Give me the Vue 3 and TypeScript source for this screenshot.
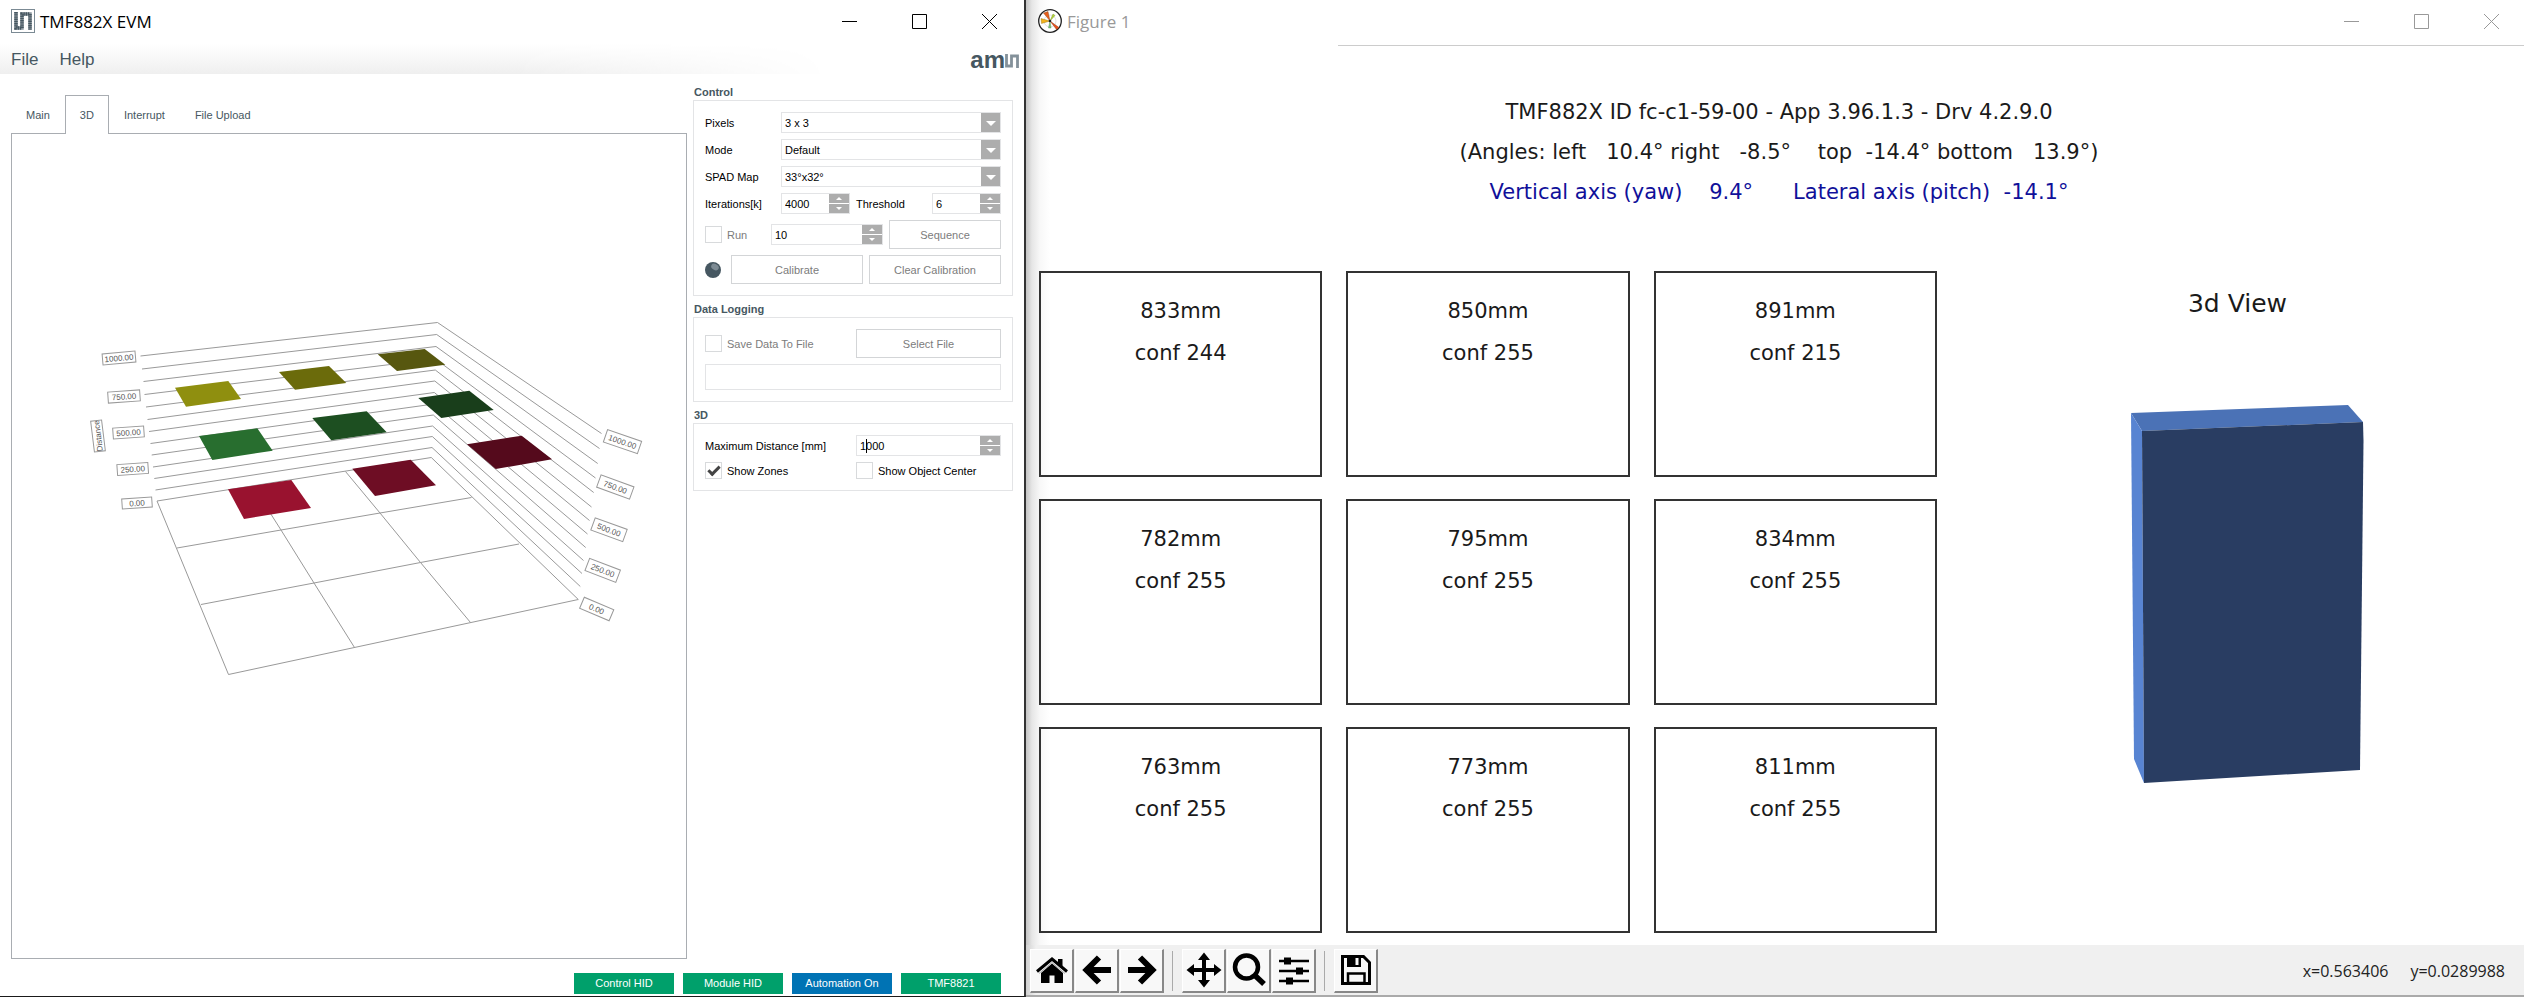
<script setup lang="ts">
import { ref } from 'vue'

type Point = [number, number]

interface Tag {
  text: string
  x: number
  y: number
  w: number
  h: number
  angle: number
}

const tabs = ['Main', '3D', 'Interrupt', 'File Upload']
const activeTab = ref('3D')

const pixels = ref('3 x 3')
const mode = ref('Default')
const spadMap = ref('33°x32°')
const iterations = ref('4000')
const threshold = ref('6')
const runCount = ref('10')
const runEnabled = ref(false)
const saveToFile = ref(false)
const filePath = ref('')
const maxDistance = ref('1000')
const showZones = ref(true)
const showCenter = ref(false)

const statuses = [
  { text: 'Control HID', kind: 'ok' },
  { text: 'Module HID', kind: 'ok' },
  { text: 'Automation On', kind: 'info' },
  { text: 'TMF8821', kind: 'ok' },
]

const levels: [Point, Point, Point][] = [
  [[140.5, 356], [437.5, 322.5], [601.5, 433.5]],
  [[142, 369], [436.7, 334.5], [599.5, 448.5]],
  [[143.5, 381.5], [436, 346.5], [597.7, 463.5]],
  [[144.5, 394.5], [435.5, 359], [595.5, 478]],
  [[146, 407], [435.3, 370], [593.7, 492.5]],
  [[147.5, 419.5], [434.8, 381], [591.5, 507]],
  [[149, 431.5], [434.3, 392.5], [589.5, 520.5]],
  [[150.5, 443.5], [433.8, 404], [587.5, 534]],
  [[151.7, 455], [433.3, 415], [585.7, 547.5]],
  [[153, 467], [432.6, 426], [583.5, 560.5]],
  [[154.3, 478.5], [432.3, 436.5], [582, 573.5]],
  [[155.5, 490], [432, 447.5], [580.3, 586.5]],
  [[157, 501], [431.3, 457.5], [578.3, 599.5]],
]

const floorLines: Point[][] = [
  [[157, 501], [228.5, 674.5], [578.3, 599.5]],
  [[177, 548], [281, 530], [380, 513], [471.5, 497.5]],
  [[201, 604.5], [314, 583], [420.5, 562.5], [519, 544]],
  [[253, 486], [281, 530], [314, 583], [354.5, 647.5]],
  [[345.5, 471.5], [380, 513], [420.5, 562.5], [470.5, 622.5]],
]

const zones: { color: string; pts: Point[] }[] = [
  { color: '#8f8f0f', pts: [[175, 387.7], [228.3, 381], [241, 399], [186, 406.7]] },
  { color: '#6b6b0b', pts: [[279, 372], [329, 366], [346.3, 383], [295, 389.7]] },
  { color: '#57570f', pts: [[377.7, 354.3], [424.7, 349], [445.3, 364.7], [397, 371]] },
  { color: '#286e2f', pts: [[199, 436], [257.3, 428.3], [272.7, 450.7], [212.3, 460]] },
  { color: '#1d4f21', pts: [[312.3, 418], [366.7, 411.3], [386.7, 432.3], [331.3, 440.3]] },
  { color: '#193e1b', pts: [[418.3, 398], [469.3, 390.7], [493.7, 410], [441.3, 418]] },
  { color: '#99122f', pts: [[228, 489.3], [291.3, 480], [311, 508], [244, 519]] },
  { color: '#6e0d24', pts: [[352.3, 468.7], [410.7, 459.7], [436, 485.3], [375, 496]] },
  { color: '#550a1c', pts: [[467, 444.3], [521.7, 435.7], [552, 459.3], [495.7, 469]] },
]

const tags: Tag[] = [
  { text: '1000.00', x: 119, y: 358, w: 33, h: 11, angle: -5 },
  { text: '750.00', x: 124, y: 396.5, w: 32, h: 11, angle: -4 },
  { text: '500.00', x: 128.5, y: 432.5, w: 31, h: 11, angle: -4 },
  { text: '250.00', x: 132.7, y: 469, w: 31, h: 11, angle: -4 },
  { text: '0.00', x: 137, y: 503, w: 30, h: 10, angle: -4 },
  { text: 'Distance', x: 98, y: 436, w: 31, h: 11, angle: -97 },
  { text: '1000.00', x: 622.5, y: 441.7, w: 36, h: 13, angle: 19 },
  { text: '750.00', x: 615.3, y: 487, w: 35, h: 13, angle: 20 },
  { text: '500.00', x: 609, y: 529.7, w: 34, h: 13, angle: 20 },
  { text: '250.00', x: 602.7, y: 570.3, w: 33, h: 13, angle: 21 },
  { text: '0.00', x: 596.7, y: 609, w: 32, h: 12, angle: 23 },
]

const readings = [
  [833, 244], [850, 255], [891, 215],
  [782, 255], [795, 255], [834, 255],
  [763, 255], [773, 255], [811, 255],
]

const anglesLine = '(Angles: left   10.4° right   -8.5°    top  -14.4° bottom   13.9°)'
const axesLine = 'Vertical axis (yaw)    9.4°      Lateral axis (pitch)  -14.1°'

const join = (pts: Point[]): string => pts.map((p) => p.join(',')).join(' ')
</script>

<template>
  <div class="desktop">
    <section class="evm">
      <header class="titlebar">
        <svg class="app-icon" viewBox="0 0 24 24" aria-hidden="true">
          <rect x="0.5" y="0.5" width="23" height="23" fill="#fff" stroke="#7b8a94" />
          <path d="M5 3V19H11V5H19V21" fill="none" stroke="#8c979e" stroke-width="3.500" />
          <path d="M5 3V19H11V5H19V21" fill="none" stroke="#465761" stroke-width="3.500" stroke-dasharray="1.400 .8" />
        </svg>
        <h1>TMF882X EVM</h1>
        <div class="win-buttons">
          <button type="button" aria-label="Minimize"><svg viewBox="0 0 16 16"><path d="M0 7.500H15" /></svg></button>
          <button type="button" aria-label="Maximize"><svg viewBox="0 0 16 16"><path d="M.5 .5H14.500V14.500H.5Z" /></svg></button>
          <button type="button" aria-label="Close"><svg viewBox="0 0 16 16"><path d="M0 0L15 15M15 0L0 15" /></svg></button>
        </div>
      </header>

      <nav class="menubar">
        <button type="button">File</button>
        <button type="button">Help</button>
        <span class="brand">am<svg viewBox="0 0 15 14" aria-hidden="true">
          <path d="M1.500 0V12H6.500V2H12.500V14" fill="none" stroke="#84919a" stroke-width="2.800" />
        </svg></span>
      </nav>

      <div class="evm-body">
        <div class="view">
          <div class="tabs" role="tablist">
            <button
              v-for="tab in tabs"
              :key="tab"
              type="button"
              role="tab"
              :aria-selected="tab === activeTab"
              :class="{ active: tab === activeTab }"
              @click="activeTab = tab"
            >{{ tab }}</button>
          </div>
          <div class="pane">
            <svg viewBox="12 134 674 824" class="plot" role="img" aria-label="Distance per zone">
              <g class="wire">
                <polyline v-for="(level, i) in levels" :key="'l' + i" :points="join(level)" />
                <polyline v-for="(line, i) in floorLines" :key="'f' + i" :points="join(line)" />
              </g>
              <polygon v-for="zone in zones" :key="zone.color" :points="join(zone.pts)" :fill="zone.color" />
              <g
                v-for="(tag, i) in tags"
                :key="'t' + i"
                class="tag"
                :transform="`translate(${tag.x} ${tag.y}) rotate(${tag.angle})`"
              >
                <rect :x="-tag.w / 2" :y="-tag.h / 2" :width="tag.w" :height="tag.h" />
                <text y="3">{{ tag.text }}</text>
              </g>
            </svg>
          </div>
        </div>

        <aside class="settings">
          <h2>Control</h2>
          <div class="group">
            <div class="row">
              <label class="name" for="pixels">Pixels</label>
              <div class="select"><select id="pixels" v-model="pixels"><option>3 x 3</option></select><i></i></div>
            </div>
            <div class="row">
              <label class="name" for="mode">Mode</label>
              <div class="select"><select id="mode" v-model="mode"><option>Default</option></select><i></i></div>
            </div>
            <div class="row">
              <label class="name" for="spad">SPAD Map</label>
              <div class="select"><select id="spad" v-model="spadMap"><option>33°x32°</option></select><i></i></div>
            </div>
            <div class="row">
              <label class="name" for="iter">Iterations[k]</label>
              <div class="spin short">
                <input id="iter" v-model="iterations" type="text" />
                <span><button type="button" aria-label="More"></button><button type="button" aria-label="Less"></button></span>
              </div>
              <label class="name threshold" for="thr">Threshold</label>
              <div class="spin short">
                <input id="thr" v-model="threshold" type="text" />
                <span><button type="button" aria-label="More"></button><button type="button" aria-label="Less"></button></span>
              </div>
            </div>
            <div class="row">
              <label class="check run off"><input v-model="runEnabled" type="checkbox" />Run</label>
              <div class="spin">
                <input v-model="runCount" type="text" aria-label="Run count" />
                <span><button type="button" aria-label="More"></button><button type="button" aria-label="Less"></button></span>
              </div>
              <button type="button" class="push sequence">Sequence</button>
            </div>
            <div class="row">
              <svg class="led" viewBox="0 0 16 16" aria-hidden="true">
                <circle cx="8" cy="8" r="8" fill="#465761" />
                <ellipse cx="10" cy="5" rx="4" ry="3" fill="#7d8b94" transform="rotate(30 10 5)" />
              </svg>
              <button type="button" class="push">Calibrate</button>
              <button type="button" class="push after">Clear Calibration</button>
            </div>
          </div>

          <h2>Data Logging</h2>
          <div class="group">
            <div class="row">
              <label class="check half off"><input v-model="saveToFile" type="checkbox" />Save Data To File</label>
              <button type="button" class="push">Select File</button>
            </div>
            <input v-model="filePath" class="path" type="text" aria-label="Log file" />
          </div>

          <h2>3D</h2>
          <div class="group">
            <div class="row">
              <label class="half" for="dist">Maximum Distance [mm]</label>
              <div class="spin">
                <input id="dist" v-model="maxDistance" type="text" />
                <b class="caret"></b>
                <span><button type="button" aria-label="More"></button><button type="button" aria-label="Less"></button></span>
              </div>
            </div>
            <div class="row">
              <label class="check half"><input v-model="showZones" type="checkbox" />Show Zones</label>
              <label class="check"><input v-model="showCenter" type="checkbox" />Show Object Center</label>
            </div>
          </div>
        </aside>
      </div>

      <footer class="status">
        <span v-for="s in statuses" :key="s.text" :class="s.kind">{{ s.text }}</span>
      </footer>
    </section>

    <section class="figure">
      <header class="titlebar">
        <svg class="app-icon" viewBox="0 0 24 24" aria-hidden="true">
          <circle cx="12" cy="12" r="11.300" fill="#fff" stroke="#222" stroke-width="1.300" />
          <circle cx="12" cy="12" r="6" fill="none" stroke="#ccc" stroke-width=".6" />
          <path d="M12 12L5.500 4L10 2.500Z" fill="#e8601c" stroke="#7a3a10" stroke-width=".4" />
          <path d="M12 12L3 9.500L3.500 14.500Z" fill="#f2b21b" stroke="#8a6a10" stroke-width=".4" />
          <path d="M12 12L15 5L17 6.500Z" fill="#b5d334" stroke="#6a8a20" stroke-width=".4" />
          <path d="M12 12L21 18.500L18.500 20.500Z" fill="#e8501c" stroke="#7a3010" stroke-width=".4" />
          <path d="M12 12L13 19L10.500 19Z" fill="#7cc576" stroke="#4a8a50" stroke-width=".4" />
          <circle cx="12" cy="12" r="1.300" fill="#222" />
        </svg>
        <h1>Figure 1</h1>
        <div class="win-buttons">
          <button type="button" aria-label="Minimize"><svg viewBox="0 0 16 16"><path d="M0 7.500H15" /></svg></button>
          <button type="button" aria-label="Maximize"><svg viewBox="0 0 16 16"><path d="M.5 .5H14.500V14.500H.5Z" /></svg></button>
          <button type="button" aria-label="Close"><svg viewBox="0 0 16 16"><path d="M0 0L15 15M15 0L0 15" /></svg></button>
        </div>
      </header>
      <div class="rule"></div>

      <div class="headline">
        <p>TMF882X ID fc-c1-59-00 - App 3.96.1.3 - Drv 4.2.9.0</p>
        <p>{{ anglesLine }}</p>
        <p class="axes">{{ axesLine }}</p>
      </div>

      <div class="canvas">
        <div class="cells">
          <div v-for="[mm, conf] in readings" :key="mm" class="cell">
            <p>{{ mm }}mm</p>
            <p>conf {{ conf }}</p>
          </div>
        </div>
        <div class="solid">
          <h2>3d View</h2>
          <svg viewBox="2111 396 252 400" aria-label="Tilted plate" role="img">
            <path d="M2130 413L2347 405L2362 422L2141 431Z" fill="#4b72b6" />
            <path d="M2130 413L2141 431L2143 783L2133 759Z" fill="#5884d2" />
            <path d="M2141 431L2362 422L2362.500 441L2359 770L2143 783Z" fill="#293d62" />
          </svg>
        </div>
      </div>

      <footer class="toolbar">
        <button type="button" aria-label="Home">
          <svg viewBox="0 0 36 36">
            <path d="M7 21L18 11.500L29 21V31H20.500V23.500H15.500V31H7Z" />
            <path d="M3 19.500L18 7L33 19.500" class="line" stroke-width="3" />
            <path d="M24 7H28.500V15L24 11.500Z" />
            <path d="M5 21.500L18 10.500L31 21.500" class="seam" />
          </svg>
        </button>
        <button type="button" aria-label="Back">
          <svg viewBox="0 0 36 36"><path d="M20 5.500L7.500 18L20 30.500M8 18H32" class="line" stroke-width="6" /></svg>
        </button>
        <button type="button" aria-label="Forward">
          <svg viewBox="0 0 36 36"><path d="M16 5.500L28.500 18L16 30.500M28 18H4" class="line" stroke-width="6" /></svg>
        </button>
        <hr />
        <button type="button" aria-label="Pan">
          <svg viewBox="0 0 36 36">
            <path d="M18 4V32M4 18H32" class="line" stroke-width="4" />
            <path d="M18 .5L24 8H12ZM18 35.500L24 28H12ZM.5 18L8 12V24ZM35.500 18L28 12V24Z" />
          </svg>
        </button>
        <button type="button" aria-label="Zoom">
          <svg viewBox="0 0 36 36">
            <circle cx="15.500" cy="15" r="11.500" class="line" stroke-width="4.500" />
            <path d="M24 23.500L33 32" class="line" stroke-width="5.500" />
          </svg>
        </button>
        <button type="button" aria-label="Configure subplots">
          <svg viewBox="0 0 36 36">
            <path d="M3 9H33M3 19H33M3 29H33" class="line" stroke-width="2.500" />
            <path d="M8 5.500H15V12.500H8ZM20 15.500H27V22.500H20ZM10 25.500H17V32.500H10Z" />
          </svg>
        </button>
        <hr />
        <button type="button" aria-label="Save">
          <svg viewBox="0 0 36 36">
            <path d="M4.500 4.500H25.500L31.500 10.500V31.500H4.500Z" class="line" stroke-width="3" />
            <path d="M10 21.500H26.500V31H10Z" class="line" stroke-width="2.500" />
            <path d="M9 4H23V15H9ZM17.500 6V13H20.500V6Z" fill-rule="evenodd" />
          </svg>
        </button>
        <output class="coords"><span>x=0.563406</span><span>y=0.0289988</span></output>
      </footer>
    </section>
  </div>
</template>

<style>
html,
body {
  margin: 0;
  background: #fff;
}
</style>

<style scoped>
.desktop {
  display: grid;
  grid-template-columns: 1026fr 1498fr;
  min-height: 100vh;
  font-family: "Liberation Sans", Arial, sans-serif;
  background: #fff;
}

.desktop * {
  box-sizing: border-box;
}

h1,
h2,
p {
  margin: 0;
  font-weight: normal;
}

button,
input,
select {
  margin: 0;
  padding: 0;
  border: 0;
  border-radius: 0;
  background: none;
  font: inherit;
  color: inherit;
  outline: 0;
}

/* Windows */
.evm {
  display: flex;
  flex-direction: column;
  border-right: 2px solid #333;
  border-bottom: 1px solid #1a1a1a;
  font-size: 11px;
}

.figure {
  display: flex;
  flex-direction: column;
  border-bottom: 2px solid #aaa;
  background: linear-gradient(to right, #c4c4c4 0, #e6e6e6 6px, #f8f8f8 14px, #fff 24px);
  font-family: "DejaVu Sans", sans-serif;
}

.titlebar {
  display: flex;
  align-items: center;
  height: 44px;
  padding: 0 26px 0 11px;
  color: #000;
}

.figure .titlebar {
  height: 45px;
  padding: 0 24px 1px 12px;
  color: #999;
}

.app-icon {
  width: 24px;
  height: 24px;
  margin-bottom: 2px;
}

.titlebar h1 {
  margin-left: 5px;
  font: 17px/24px "Open Sans", "Noto Sans", sans-serif;
}

.win-buttons {
  display: flex;
  gap: 54px;
  margin-bottom: 1px;
  margin-left: auto;
}

.win-buttons button {
  width: 16px;
  height: 16px;
}

.win-buttons svg {
  display: block;
  width: 16px;
  height: 16px;
  fill: none;
  stroke: currentColor;
}

/* Menu */
.menubar {
  position: relative;
  display: flex;
  align-items: center;
  gap: 21px;
  height: 30px;
  padding: 1px 4px 0 11px;
  color: #465761;
  font-size: 17px;
}

.menubar::before {
  content: "";
  position: absolute;
  inset: 0;
  background: linear-gradient(#fff, #efefef);
  mask-image: linear-gradient(to right, #000 50%, transparent 81%);
}

.menubar > * {
  position: relative;
}

.brand {
  display: flex;
  align-items: center;
  margin-left: auto;
  color: #465761;
  font: bold 24px/24px "Liberation Sans", Arial, sans-serif;
}

.brand svg {
  width: 15px;
  height: 14px;
  margin-top: 3px;
}

/* Body */
.evm-body {
  flex: 1;
  display: grid;
  grid-template-columns: minmax(0, 1fr) 320px;
  gap: 6px;
  padding: 0 11px;
}

.view {
  display: flex;
  flex-direction: column;
  padding-top: 21px;
}

.tabs {
  display: flex;
  height: 39px;
  margin-bottom: -1px;
  color: #465761;
}

.tabs button {
  padding: 0 14px;
  border: 1px solid transparent;
  border-bottom: 0;
}

.tabs .active {
  position: relative;
  border-color: #a9adb2;
  background: #fff;
}

.pane {
  flex: 1;
  border: 1px solid #a9adb2;
  display: flex;
  align-items: flex-start;
}

.plot {
  width: 100%;
  height: auto;
}

.wire {
  fill: none;
  stroke: #999;
  stroke-width: 1;
}

.tag rect {
  fill: #fff;
  stroke: #999;
  stroke-width: 1;
}

.tag text {
  fill: #555;
  font-size: 8px;
  text-anchor: middle;
}

/* Settings */
.settings {
  padding-top: 10px;
  color: #000;
}

.settings h2 {
  padding-left: 1px;
  color: #465761;
  font: bold 11px/16px "Liberation Sans", Arial, sans-serif;
}

.group {
  display: flex;
  flex-direction: column;
  gap: 6px;
  margin-bottom: 5px;
  padding: 11px;
  border: 1px solid #e3e4e6;
}

.row {
  display: flex;
  align-items: center;
}

.name {
  width: 76px;
}

.name.threshold {
  padding-left: 6px;
  width: 82px;
}

.half {
  width: 151px;
}

.select,
.spin {
  position: relative;
  flex: 1;
  display: flex;
  min-width: 0;
  height: 21px;
  border: 1px solid #e3e4e6;
}

.select select {
  flex: 1;
  padding: 0 24px 0 3px;
  appearance: none;
}

.select i {
  position: absolute;
  top: 0;
  right: 0;
  width: 19px;
  height: 19px;
  background: #adadad;
  pointer-events: none;
}

.select i::after {
  content: "";
  position: absolute;
  left: 5px;
  top: 8px;
  border: 5px solid transparent;
  border-top-color: #fff;
  border-bottom: 0;
}

.spin input {
  flex: 1;
  min-width: 0;
  padding-left: 3px;
}

.spin span {
  display: grid;
  grid-template-rows: 1fr 1fr;
  gap: 1px;
  width: 20px;
}

.spin span button {
  display: flex;
  align-items: center;
  justify-content: center;
  background: #adadad;
}

.spin span button::after {
  content: "";
  border: 3px solid transparent;
  border-bottom-color: #fff;
  border-top: 0;
}

.spin span button + button::after {
  border: 3px solid transparent;
  border-top-color: #fff;
  border-bottom: 0;
}

.caret {
  position: absolute;
  left: 9px;
  top: 3px;
  width: 1px;
  height: 14px;
  background: #000;
}

.check {
  display: flex;
  align-items: center;
  gap: 5px;
}

.check.run {
  width: 66px;
}

.off {
  color: #7c7c7c;
}

.check input {
  display: grid;
  place-items: center;
  width: 17px;
  height: 17px;
  border: 1px solid #d8dadc;
  background: #fff;
  appearance: none;
}

.check input:checked::after {
  content: "";
  width: 9px;
  height: 4px;
  margin-bottom: 3px;
  border: solid #444;
  border-width: 0 0 3px 3px;
  transform: rotate(-45deg);
}

.push {
  flex: 1;
  height: 29px;
  border: 1px solid #d3d5d7;
  background: #fff;
  color: #7c7c7c;
}

.push.sequence {
  flex: 0 0 112px;
  margin-left: 6px;
}

.push.after {
  margin-left: 6px;
}

.led {
  width: 16px;
  height: 16px;
  margin-right: 10px;
}

.path {
  height: 26px;
  padding: 0 4px;
  border: 1px solid #e3e4e6;
}

/* Status */
.status {
  display: flex;
  justify-content: flex-end;
  gap: 9px;
  padding: 14px 23px 2px 11px;
}

.status span {
  width: 100px;
  color: #fff;
  line-height: 21px;
  text-align: center;
}

.ok {
  background: #00a06b;
}

.info {
  background: #0073b4;
}

/* Figure */
.rule {
  height: 1px;
  margin-left: 312px;
  background: #ccc;
}

.headline {
  padding: 46px 0 0 8px;
  color: #1a1a1a;
  font-size: 21px;
  line-height: 40px;
  text-align: center;
  white-space: pre;
}

.axes {
  color: #10109a;
}

.canvas {
  flex: 1;
  display: grid;
  grid-template-columns: 898fr 587fr;
  padding: 59px 0 12px 13px;
}

.cells {
  display: grid;
  grid-template-columns: repeat(3, 1fr);
  grid-template-rows: repeat(3, 1fr);
  gap: 22px 24px;
}

.cell {
  padding-top: 17px;
  border: 2px solid #333;
  color: #1a1a1a;
  font-size: 21px;
  line-height: 42px;
  text-align: center;
}

.solid {
  display: flex;
  flex-direction: column;
  align-items: center;
  padding: 17px 0 0 14px;
}

.solid h2 {
  color: #1a1a1a;
  font-size: 25px;
  line-height: 32px;
}

.solid svg {
  width: 252px;
  height: 400px;
  margin-top: 76px;
}

/* Toolbar */
.toolbar {
  display: flex;
  align-items: center;
  gap: 1px;
  height: 50px;
  padding: 1px 19px 0 4px;
  background: linear-gradient(to right, #d0d0d0 0, #f0f0f0 10px);
}

.toolbar button {
  display: grid;
  place-items: center;
  width: 44px;
  height: 44px;
  border: solid;
  border-width: 1px 2px 2px 1px;
  border-color: #fff #888 #888 #fff;
  background: #f8f8f8;
}

.toolbar svg {
  width: 36px;
  height: 36px;
}

.line {
  fill: none;
  stroke: #000;
}

.seam {
  fill: none;
  stroke: #aaa;
  stroke-width: 1;
}

.toolbar hr {
  width: 1px;
  height: 40px;
  margin: 0 8px 0 7px;
  border: 0;
  background: #aaa;
}

.coords {
  display: flex;
  gap: 22px;
  margin-left: auto;
  color: #222;
  font: 16px/24px "Open Sans", "Noto Sans", sans-serif;
}
</style>
